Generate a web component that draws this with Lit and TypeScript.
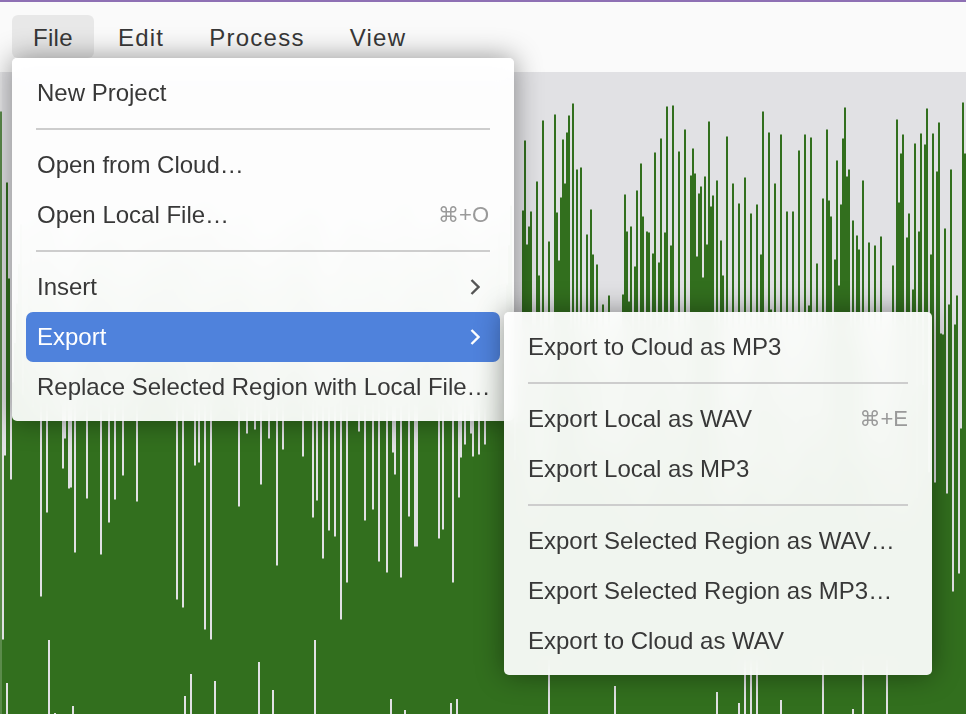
import { LitElement, html, css } from 'lit';
import { customElement } from 'lit/decorators.js';

// green bars whose tips show above the menus: x, top
const TOPS: number[][] = [
  [0,112],[2,640],[4,456],[6,183],[8,279],[10,480],
  [40,597],[46,513],[62,469],[64,439],[68,489],[70,488],[74,553],[86,499],[100,555],[108,523],[114,500],[122,476],[136,502],
  [176,600],[182,608],[194,466],[198,463],[204,630],[210,640],[238,507],[246,434],[254,430],[260,485],[268,439],[276,566],[282,450],
  [302,457],[312,518],[316,501],[322,559],[328,531],[334,537],[340,620],[346,583],[358,432],[364,521],[372,510],[378,562],[386,573],[392,453],[394,475],
  [400,578],[408,517],[414,547],[416,547],[438,539],[442,530],[452,583],[458,498],[460,458],[464,445],[470,434],[472,457],[478,455],[484,445],
  [522,211],[524,141],[526,245],[528,227],[530,212],[536,182],[538,276],[542,121],[548,242],[554,115],[556,213],[558,261],[560,198],[562,140],[564,184],[566,133],[568,116],[572,104],[576,170],[580,168],[586,235],[590,210],[592,255],[596,265],
  [602,305],[608,296],[622,295],[624,195],[626,232],[628,302],[630,227],[634,267],[636,191],[640,164],[642,217],[646,232],[648,233],[652,254],[654,153],[658,263],[660,139],[664,233],[666,107],[670,246],[672,106],[678,152],[684,130],
  [690,176],[692,149],[694,174],[696,257],[698,194],[700,187],[702,278],[704,177],[706,245],[708,122],[710,207],[712,196],[716,181],[720,241],[722,276],[726,137],[732,184],[738,204],[744,178],[750,214],[756,205],[760,255],[762,112],[768,133],[770,310],[774,184],
  [780,135],[786,212],[792,212],[798,151],[804,135],[808,306],[810,138],[816,264],[822,199],[826,130],[828,201],[830,217],[834,260],[836,161],[838,286],[840,205],[842,139],[844,108],[846,177],[848,170],[852,221],[856,236],[858,250],[862,181],[868,243],[874,246],[880,237],[892,266],[896,120],[898,203],[900,154],[902,135],[906,238],[908,214],
  [912,290],[914,144],[918,232],[920,134],[924,145],[926,109],[930,255],[932,134],[934,483],[936,172],[938,123],[940,334],[942,335],[944,229],[946,494],[948,305],[950,170],[952,592],[954,325],[956,296],[958,574],[960,429],[962,103],[964,154],
];

// bars that end above the bottom of the window: x, bottom
const BOTTOMS: number[][] = [
  [6,683],[48,640],[54,713],[72,706],[184,696],[190,674],[214,681],[258,662],[272,690],[314,640],[390,699],[404,710],[450,703],[456,699],
  [548,660],[614,686],[716,692],[738,703],[744,660],[750,660],[756,660],[780,700],[822,660],[852,709],[862,660],[886,660],
];

const GRID = [11, 147, 283, 419, 554.5, 690.5, 826.5, 962.5];

function wavePath() {
  const tops = new Map(TOPS.map(([x, y]) => [x, y] as [number, number]));
  const bottoms = new Map(BOTTOMS.map(([x, y]) => [x, y] as [number, number]));
  let d = '';
  for (let x = 0; x < 966; x += 2) {
    // columns hidden behind the menus only feed the blur, so any value will do
    const r = ((x * 7919) % 101) / 101;
    const fallback = x < 514 ? 200 + r * 210 : 330 + r * 200;
    const top = (tops.get(x) ?? fallback) - 0.4;
    const bottom = bottoms.get(x) ?? 800;
    d += `M${x} ${top}H${x + 2}V${bottom}H${x}Z`;
  }
  return d;
}

const chevron = html`<svg class="chevron" viewBox="0 0 10 16"><path d="M1.5 1l7 7-7 7"></path></svg>`;

@customElement('app-root')
export class AppRoot extends LitElement {
  static styles = css`
    :host {
      display: block;
      position: relative;
      width: 966px;
      height: 714px;
      overflow: hidden;
      font-family: 'Liberation Sans', Arial, sans-serif;
      color: #383838;
      background: #e1e1e4;
    }

    .bar {
      display: flex;
      gap: 3px;
      box-sizing: border-box;
      height: 72px;
      padding: 13px 0 0 12px;
      background: #fafafa;
      border-top: 2px solid #8e70b4;
    }

    .bar span {
      height: 43px;
      padding: 0 21px;
      line-height: 45px;
      font-size: 24px;
      letter-spacing: 1.25px;
      border-radius: 6px;
    }

    .bar span.open {
      background: #e8e8e8;
      letter-spacing: 0.3px;
    }

    .wave {
      display: block;
      width: 966px;
      height: 642px;
    }

    .menu {
      position: absolute;
      box-sizing: border-box;
      padding: 10px 14px;
      border-radius: 5px;
      background: rgba(255, 255, 255, 0.93);
      backdrop-filter: blur(10px);
      box-shadow: 0 0 28px rgba(0, 0, 0, 0.42);
    }

    .main {
      left: 12px;
      top: 58px;
      width: 502px;
      height: 363px;
    }

    .sub {
      left: 504px;
      top: 312px;
      width: 428px;
      height: 363px;
    }

    .item {
      display: flex;
      align-items: center;
      justify-content: space-between;
      height: 50px;
      padding: 0 11px;
      font-size: 24px;
      white-space: nowrap;
      border-radius: 7px;
    }

    .sub .item {
      padding: 0 10px;
    }

    .item.active {
      background: #4f82dc;
      color: #fff;
    }

    .sep {
      height: 2px;
      margin: 10px 10px;
      background: #cdcdcd;
    }

    .keys {
      font-family: 'DejaVu Sans', sans-serif;
      font-size: 21px;
      color: #9a9a9a;
    }

    .keys b {
      font-family: 'Liberation Sans', Arial, sans-serif;
      font-size: 22px;
      font-weight: normal;
    }

    .chevron {
      width: 10px;
      height: 16px;
      margin-right: 9px;
      fill: none;
      stroke: #555;
      stroke-width: 2.4;
    }

    .active .chevron {
      stroke: #fff;
    }

    .grid {
      fill: rgba(0, 0, 0, 0.1);
    }
  `;

  render() {
    return html`
      <div class="bar">
        <span class="open">File</span>
        <span>Edit</span>
        <span>Process</span>
        <span>View</span>
      </div>

      <svg class="wave" viewBox="0 72 966 642">
        <path d=${wavePath()} fill="#326f1e"></path>
        ${GRID.map((x) => html`<rect class="grid" x=${x} y="74" width="2" height="640"></rect>`)}
        <rect x="0" y="72" width="2" height="642" fill="#fff" opacity="0.2"></rect>
      </svg>

      <div class="menu main">
        <div class="item">New Project</div>
        <div class="sep"></div>
        <div class="item">Open from Cloud…</div>
        <div class="item">Open Local File…<span class="keys">⌘<b>+O</b></span></div>
        <div class="sep"></div>
        <div class="item">Insert${chevron}</div>
        <div class="item active">Export${chevron}</div>
        <div class="item">Replace Selected Region with Local File…</div>
      </div>

      <div class="menu sub">
        <div class="item">Export to Cloud as MP3</div>
        <div class="sep"></div>
        <div class="item">Export Local as WAV<span class="keys">⌘<b>+E</b></span></div>
        <div class="item">Export Local as MP3</div>
        <div class="sep"></div>
        <div class="item">Export Selected Region as WAV…</div>
        <div class="item">Export Selected Region as MP3…</div>
        <div class="item">Export to Cloud as WAV</div>
      </div>
    `;
  }
}
